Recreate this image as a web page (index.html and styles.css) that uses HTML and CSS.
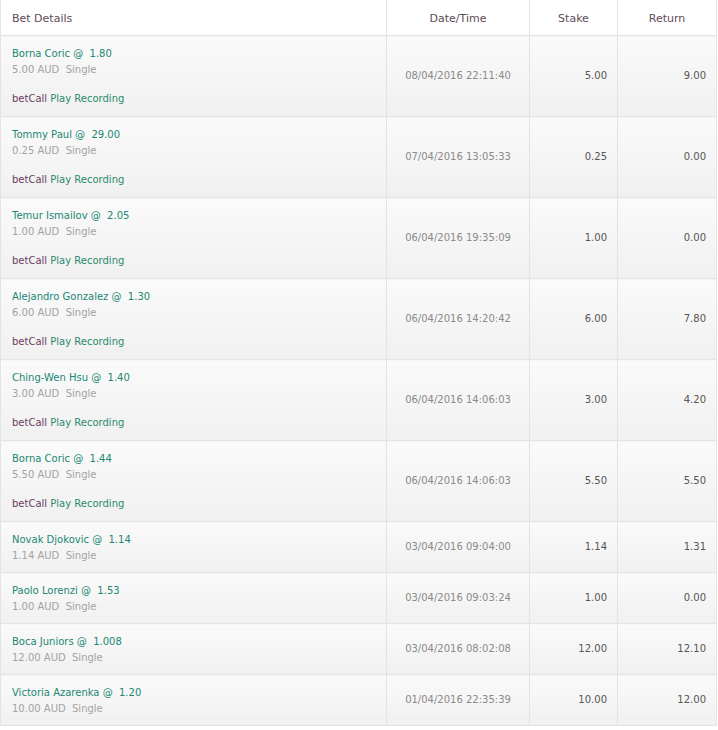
FILE: index.html
```html
<!DOCTYPE html>
<html>
<head>
<meta charset="utf-8">
<link rel="stylesheet" href="styles.css">
</head>
<body>
<table class="bets">
  <colgroup>
    <col class="c-details"><col class="c-date"><col class="c-stake"><col class="c-return">
  </colgroup>
  <thead>
    <tr>
      <th class="h-left">Bet Details</th>
      <th>Date/Time</th>
      <th>Stake</th>
      <th>Return</th>
    </tr>
  </thead>
  <tbody>
    <tr>
      <td class="details"><div class="sel">Borna Coric @&nbsp; 1.80</div><div class="sub">5.00 AUD&nbsp; Single</div><div class="rec"><span class="bc">betCall</span> Play Recording</div></td>
      <td class="date">08/04/2016 22:11:40</td><td class="num">5.00</td><td class="num">9.00</td>
    </tr>
    <tr>
      <td class="details"><div class="sel">Tommy Paul @&nbsp; 29.00</div><div class="sub">0.25 AUD&nbsp; Single</div><div class="rec"><span class="bc">betCall</span> Play Recording</div></td>
      <td class="date">07/04/2016 13:05:33</td><td class="num">0.25</td><td class="num">0.00</td>
    </tr>
    <tr>
      <td class="details"><div class="sel">Temur Ismailov @&nbsp; 2.05</div><div class="sub">1.00 AUD&nbsp; Single</div><div class="rec"><span class="bc">betCall</span> Play Recording</div></td>
      <td class="date">06/04/2016 19:35:09</td><td class="num">1.00</td><td class="num">0.00</td>
    </tr>
    <tr>
      <td class="details"><div class="sel">Alejandro Gonzalez @&nbsp; 1.30</div><div class="sub">6.00 AUD&nbsp; Single</div><div class="rec"><span class="bc">betCall</span> Play Recording</div></td>
      <td class="date">06/04/2016 14:20:42</td><td class="num">6.00</td><td class="num">7.80</td>
    </tr>
    <tr>
      <td class="details"><div class="sel">Ching-Wen Hsu @&nbsp; 1.40</div><div class="sub">3.00 AUD&nbsp; Single</div><div class="rec"><span class="bc">betCall</span> Play Recording</div></td>
      <td class="date">06/04/2016 14:06:03</td><td class="num">3.00</td><td class="num">4.20</td>
    </tr>
    <tr>
      <td class="details"><div class="sel">Borna Coric @&nbsp; 1.44</div><div class="sub">5.50 AUD&nbsp; Single</div><div class="rec"><span class="bc">betCall</span> Play Recording</div></td>
      <td class="date">06/04/2016 14:06:03</td><td class="num">5.50</td><td class="num">5.50</td>
    </tr>
    <tr>
      <td class="details"><div class="sel">Novak Djokovic @&nbsp; 1.14</div><div class="sub">1.14 AUD&nbsp; Single</div></td>
      <td class="date">03/04/2016 09:04:00</td><td class="num">1.14</td><td class="num">1.31</td>
    </tr>
    <tr>
      <td class="details"><div class="sel">Paolo Lorenzi @&nbsp; 1.53</div><div class="sub">1.00 AUD&nbsp; Single</div></td>
      <td class="date">03/04/2016 09:03:24</td><td class="num">1.00</td><td class="num">0.00</td>
    </tr>
    <tr>
      <td class="details"><div class="sel">Boca Juniors @&nbsp; 1.008</div><div class="sub">12.00 AUD&nbsp; Single</div></td>
      <td class="date">03/04/2016 08:02:08</td><td class="num">12.00</td><td class="num">12.10</td>
    </tr>
    <tr>
      <td class="details"><div class="sel">Victoria Azarenka @&nbsp; 1.20</div><div class="sub">10.00 AUD&nbsp; Single</div></td>
      <td class="date">01/04/2016 22:35:39</td><td class="num">10.00</td><td class="num">12.00</td>
    </tr>
  </tbody>
</table>
</body>
</html>
```
FILE: styles.css
```css
html, body {
  margin: 0;
  padding: 0;
  background: #ffffff;
}
body {
  font-family: "DejaVu Sans", Verdana, sans-serif;
  font-size: 10px;
}
.bets {
  border-collapse: collapse;
  table-layout: fixed;
  width: 716px;
}
.c-details { width: 386px; }
.c-date { width: 143px; }
.c-stake { width: 88px; }
.c-return { width: 99px; }

.bets th {
  height: 34px;
  padding: 1px 0 0 0;
  font-size: 11px;
  font-weight: normal;
  color: #5d4b56;
  text-align: center;
  background: #ffffff;
  border-left: 1px solid #e3e3e3;
  border-right: 1px solid #e3e3e3;
  border-bottom: 1px solid #e3e3e3;
  vertical-align: middle;
}
.bets th.h-left {
  text-align: left;
  padding-left: 11px;
}
.bets td {
  background: linear-gradient(#fafafa, #f0f0f0);
  border: 1px solid #e3e3e3;
  border-top: none;
  vertical-align: middle;
  line-height: 16px;
}
.bets td.details {
  padding: 10px 0 8px 11px;
}
.sel { color: #1a8774; }
.sub { color: #a3a3a3; }
.rec {
  margin-top: 13px;
  margin-bottom: 1px;
  color: #2a8a6c;
}
.bc { color: #6b3c5f; }
.bets td.date {
  text-align: center;
  color: #8a8a8a;
}
.bets td.num {
  text-align: right;
  padding-right: 10px;
  color: #555555;
}
```
